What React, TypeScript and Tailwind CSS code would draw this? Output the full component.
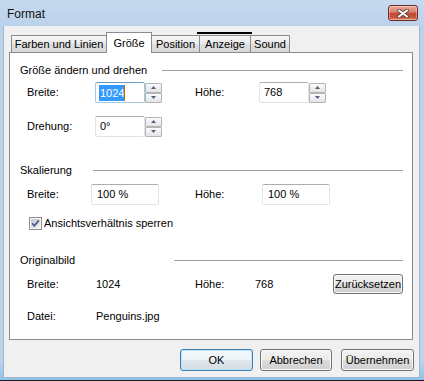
import React from "react";

function SpinArrow({ up }: { up?: boolean }) {
  return (
    <div className="w-[17px] h-[10px] border border-[#b4b4b4] rounded-[1px] bg-[linear-gradient(to_bottom,#fbfbfb,#e4e4e4)] flex items-center justify-center">
      <svg width="5" height="3" viewBox="0 0 5 3">
        {up ? (
          <polygon points="2.5,0 5,3 0,3" fill="#4d6185" />
        ) : (
          <polygon points="0,0 5,0 2.5,3" fill="#4d6185" />
        )}
      </svg>
    </div>
  );
}

function Spin({ value, focused }: { value: string; focused?: boolean }) {
  return (
    <div className="flex items-center w-[67px] h-[21px]">
      <div
        className={
          focused
            ? "w-[50px] h-[21px] flex items-center pl-[4px] bg-white border border-[#a4c9e3] border-t-[#6d9bc4] rounded-[2px]"
            : "w-[50px] h-[21px] flex items-center pl-[4px] bg-white border border-[#e2e3ea] border-t-[#abadb3] rounded-[2px]"
        }
      >
        {focused ? (
          <span className="flex items-center">
            <span className="-ml-[1px] pl-[1px] h-[16px] leading-[16px] bg-[#3399ff] text-white">{value}</span>
            <span className="w-[1px] h-[16px] bg-[#cc6600]" />
          </span>
        ) : (
          <span>{value}</span>
        )}
      </div>
      <div className="flex flex-col w-[17px] h-[20px] justify-between">
        <SpinArrow up />
        <SpinArrow />
      </div>
    </div>
  );
}

function TextBox({ value }: { value: string }) {
  return (
    <div className="w-[68px] h-[21px] flex items-center pl-[5px] bg-white border border-[#e2e3ea] border-t-[#abadb3] rounded-[2px]">
      {value}
    </div>
  );
}

function Header({ title, w }: { title: string; w: string }) {
  return (
    <div className="flex items-center h-[14px]">
      <div className={w}>{title}</div>
      <div className="flex-1 h-px bg-[#a0a0a0]" />
    </div>
  );
}

function Btn({ children, w, def }: { children: React.ReactNode; w: string; def?: boolean }) {
  return (
    <div
      className={
        (def
          ? "border-[#3c7fb1] bg-[linear-gradient(to_bottom,#f4f9fc_0%,#ecf2f6_50%,#dfe7ec_51%,#d3dde3_100%)] shadow-[inset_0_0_0_1px_#bfe3f7] "
          : "border-[#707070] bg-[linear-gradient(to_bottom,#f2f2f2_0%,#ebebeb_50%,#dddddd_51%,#cfcfcf_100%)] shadow-[inset_0_0_0_1px_#fbfbfb] ") +
        "border rounded-[3px] flex items-center justify-center " +
        w
      }
    >
      {children}
    </div>
  );
}

function Tab({ label, w, active, hot }: { label: string; w: string; active?: boolean; hot?: boolean }) {
  if (active) {
    return (
      <div className={"relative z-10 -ml-px -mb-px h-[21px] bg-white border border-b-0 border-[#898c95] flex items-center justify-center " + w}>
        {label}
      </div>
    );
  }
  return (
    <div
      className={
        "relative -ml-px first:ml-0 h-[17px] border border-b-0 border-[#898c95] bg-[linear-gradient(to_bottom,#f5f5f5,#e9e9e9_50%,#dedede_51%,#d8d8d8)] flex items-center justify-center " +
        w
      }
    >
      {hot && <span className="absolute -top-[4px] -left-[3px] -right-[2px] h-[2px] bg-black" />}
      {label}
    </div>
  );
}

function Checkbox() {
  return (
    <svg width="13" height="13" viewBox="0 0 13 13">
      <defs>
        <linearGradient id="cbg" x1="0" y1="0" x2="1" y2="1">
          <stop offset="0" stopColor="#c4c9d0" />
          <stop offset="1" stopColor="#f3f3f3" />
        </linearGradient>
      </defs>
      <rect x="0.5" y="0.5" width="12" height="12" fill="#f6f6f6" stroke="#8e8f8f" />
      <rect x="2" y="2" width="9" height="9" fill="url(#cbg)" />
      <path d="M3.2 6.3 L5.3 8.9 L9.8 3.4" stroke="#4a5f8f" strokeWidth="1.8" fill="none" />
    </svg>
  );
}

export default function App() {
  return (
    <div className="w-[424px] h-[381px] flex flex-col bg-[linear-gradient(to_bottom,#c6d9ef,#bbd2eb_26px,#bdd3ec_360px,#8ec3e8)] border-b border-b-[#1a1a1a] font-['Liberation_Sans',Arial,sans-serif] text-[11px] text-black overflow-hidden">
      <div className="h-[26px] flex items-start shrink-0">
        <span className="ml-[7px] mt-[7px] text-[12px] leading-[14px] text-[#111]">Format</span>
        <div className="ml-auto mt-[5px] mr-[6px] w-[30px] h-[16px] rounded-[3px] border border-[#6e2a22] bg-[linear-gradient(to_bottom,#e9a99a,#d8806c_45%,#c24a34_50%,#c5523c_80%,#d9886e)] shadow-[inset_0_0_0_1px_rgba(255,255,255,0.35)] flex items-center justify-center">
          <svg width="12" height="9" viewBox="0 0 12 9">
            <path d="M2 1.5 L10 7.5 M10 1.5 L2 7.5" stroke="#5a3a35" strokeWidth="3.6" strokeLinecap="round" />
            <path d="M2 1.5 L10 7.5 M10 1.5 L2 7.5" stroke="#ffffff" strokeWidth="2.1" strokeLinecap="round" />
          </svg>
        </div>
      </div>
      <div className="flex-1 ml-[3px] mr-[4px] mb-[2px] border-x border-b border-[#9fb6d0] bg-[#f0f0f0] flex flex-col pt-[6px]">
        <div className="flex items-end h-[20px] ml-[7px]">
          <Tab label="Farben und Linien" w="w-[96px]" />
          <Tab label="Größe" w="w-[46px]" active />
          <Tab label="Position" w="w-[49px]" />
          <Tab label="Anzeige" w="w-[52px]" hot />
          <Tab label="Sound" w="w-[40px]" />
        </div>
        <div className="ml-[5px] w-[404px] h-[288px] border border-[#898c95] bg-white pl-[10px] pr-[9px] pt-[10px] flex flex-col">
          <Header title="Größe ändern und drehen" w="w-[142px]" />
          <div className="mt-[5px] h-[21px] flex items-center pl-[7px]">
            <div className="w-[68px]">Breite:</div>
            <Spin value="1024" focused />
            <div className="ml-[33px] w-[64px]">Höhe:</div>
            <Spin value="768" />
          </div>
          <div className="mt-[13px] h-[21px] flex items-center pl-[7px]">
            <div className="w-[68px]">Drehung:</div>
            <Spin value="0°" />
          </div>
          <div className="mt-[26px]">
            <Header title="Skalierung" w="w-[73px]" />
          </div>
          <div className="mt-[7px] h-[21px] flex items-center pl-[7px]">
            <div className="w-[64px]">Breite:</div>
            <TextBox value="100 %" />
            <div className="ml-[36px] w-[67px]">Höhe:</div>
            <TextBox value="100 %" />
          </div>
          <div className="mt-[12px] h-[13px] flex items-center pl-[9px]">
            <Checkbox />
            <span className="ml-[2px]">Ansichtsverhältnis sperren</span>
          </div>
          <div className="mt-[23px]">
            <Header title="Originalbild" w="w-[154px]" />
          </div>
          <div className="mt-[7px] h-[20px] flex items-center pl-[7px]">
            <div className="w-[69px]">Breite:</div>
            <div className="w-[99px]">1024</div>
            <div className="w-[60px]">Höhe:</div>
            <div className="w-[78px]">768</div>
            <Btn w="w-[70px] h-[20px]">Zurücksetzen</Btn>
          </div>
          <div className="mt-[15px] h-[14px] flex items-center pl-[7px]">
            <div className="w-[69px]">Datei:</div>
            <div>Penguins.jpg</div>
          </div>
        </div>
        <div className="flex mt-[9px] ml-[176px]">
          <Btn w="w-[73px] h-[22px]" def>OK</Btn>
          <div className="ml-[7px]">
            <Btn w="w-[72px] h-[22px]">Abbrechen</Btn>
          </div>
          <div className="ml-[9px]">
            <Btn w="w-[73px] h-[22px]">Übernehmen</Btn>
          </div>
        </div>
      </div>
    </div>
  );
}
